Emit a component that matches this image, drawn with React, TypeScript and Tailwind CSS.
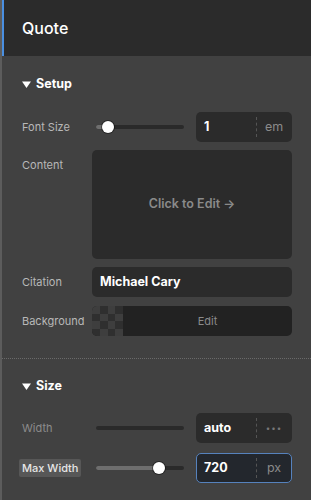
import { ReactNode } from "react";

const font = { fontFamily: "Inter, 'Liberation Sans', sans-serif" };

function SectionTitle({ children }: { children: ReactNode }) {
  return (
    <div className="flex h-4 items-center gap-[5px] text-[12.5px] font-bold text-white">
      <svg width="9" height="7" viewBox="0 0 9 7" className="fill-white">
        <path d="M0 0.5h9L4.5 7z" />
      </svg>
      {children}
    </div>
  );
}

function Label({ children, dim }: { children: ReactNode; dim?: boolean }) {
  return (
    <div className={`flex h-[30px] items-center text-[11px] ${dim ? "text-[#8c8c8c]" : "text-[#b8b8b8]"}`}>
      {children}
    </div>
  );
}

function Slider({ pct }: { pct?: number }) {
  return (
    <div className="flex flex-1 items-center px-1">
      <div className="relative h-1 w-full rounded-full bg-[#2a2a2a]">
        {pct !== undefined && (
          <>
            <div className="absolute left-0 top-0 h-1 rounded-full bg-[#6e6e6e]" style={{ width: `${pct}%` }} />
            <div
              className="absolute top-1/2 h-3 w-3 -translate-x-1/2 -translate-y-1/2 rounded-full bg-white shadow-[0_0_0_1px_rgba(0,0,0,0.4)]"
              style={{ left: `${pct}%` }}
            />
          </>
        )}
      </div>
    </div>
  );
}

function NumberBox({ value, unit, focused, small }: { value: string; unit: ReactNode; focused?: boolean; small?: boolean }) {
  return (
    <div
      className={`flex h-[30px] w-[96px] items-center rounded-[5px] border ${
        focused ? "border-[#5682bd] bg-[#23272d]" : "border-transparent bg-[#2b2b2b]"
      }`}
    >
      <span className="flex-1 pl-[7px] text-[12.5px] font-bold text-white">{value}</span>
      <span className="h-5 border-l border-dashed border-[#555]" />
      <span
        className={`flex w-[34px] justify-center ${
          small ? "text-[8px] tracking-[1px] text-[#777]" : "text-[12.5px] text-[#8a8a8a]"
        }`}
      >
        {unit}
      </span>
    </div>
  );
}

function Checker() {
  const cells = Array.from({ length: 16 }, (_, i) => i);
  return (
    <div className="grid h-full w-[31px] grid-cols-4 grid-rows-4 overflow-hidden rounded-l-[5px]">
      {cells.map((i) => (
        <div key={i} className={(Math.floor(i / 4) + i) % 2 === 0 ? "bg-[#3e3e3e]" : "bg-[#2f2f2f]"} />
      ))}
    </div>
  );
}

export default function App() {
  return (
    <div className="flex h-[500px] w-[311px] overflow-hidden bg-[#414141]" style={font}>
      <div className="w-[2px] shrink-0 bg-[#5c5c5c]" />
      <div className="flex flex-1 flex-col">
        <header className="flex h-[56px] items-center border-l-2 border-[#4a8fe0] bg-[#2b2b2b] pl-[18px] text-[16px] font-medium text-white">
          Quote
        </header>

        <section className="pb-[22px] pl-[20px] pr-[19px] pt-[20px]">
          <SectionTitle>Setup</SectionTitle>
          <div className="mt-[20px] grid grid-cols-[70px_1fr] gap-y-2">
            <Label>Font Size</Label>
            <div className="flex items-center gap-2">
              <Slider pct={14} />
              <NumberBox value="1" unit="em" />
            </div>

            <div className="self-start">
              <Label>Content</Label>
            </div>
            <div className="flex h-[109px] items-center justify-center rounded-[5px] bg-[#2b2b2b] text-[12.5px] font-semibold text-[#8a8a8a]">
              Click to Edit →
            </div>

            <Label>Citation</Label>
            <div className="flex h-[30px] items-center rounded-[5px] bg-[#2b2b2b] pl-2 text-[12.5px] font-bold text-white">
              Michael Cary
            </div>

            <div className="pt-px">
              <Label>Background</Label>
            </div>
            <div className="mt-px flex h-[30px] rounded-[5px] bg-[#222222]">
              <Checker />
              <div className="flex flex-1 items-center justify-center text-[11px] text-[#8a8a8a]">Edit</div>
            </div>
          </div>
        </section>

        <div className="border-t border-dotted border-[#6a6a6a]" />

        <section className="pl-[20px] pr-[19px] pt-[19px]">
          <SectionTitle>Size</SectionTitle>
          <div className="mt-[19px] grid grid-cols-[70px_1fr] gap-y-[10px]">
            <Label dim>Width</Label>
            <div className="flex items-center gap-2">
              <Slider />
              <NumberBox value="auto" unit="•••" small />
            </div>

            <div className="flex h-[30px] items-center">
              <span className="-ml-[3px] rounded-[2px] bg-[#575757] px-[3px] py-px text-[11px] font-medium text-[#e6e6e6]">
                Max Width
              </span>
            </div>
            <div className="flex items-center gap-2">
              <Slider pct={72} />
              <NumberBox value="720" unit="px" focused />
            </div>
          </div>
        </section>
      </div>
    </div>
  );
}
